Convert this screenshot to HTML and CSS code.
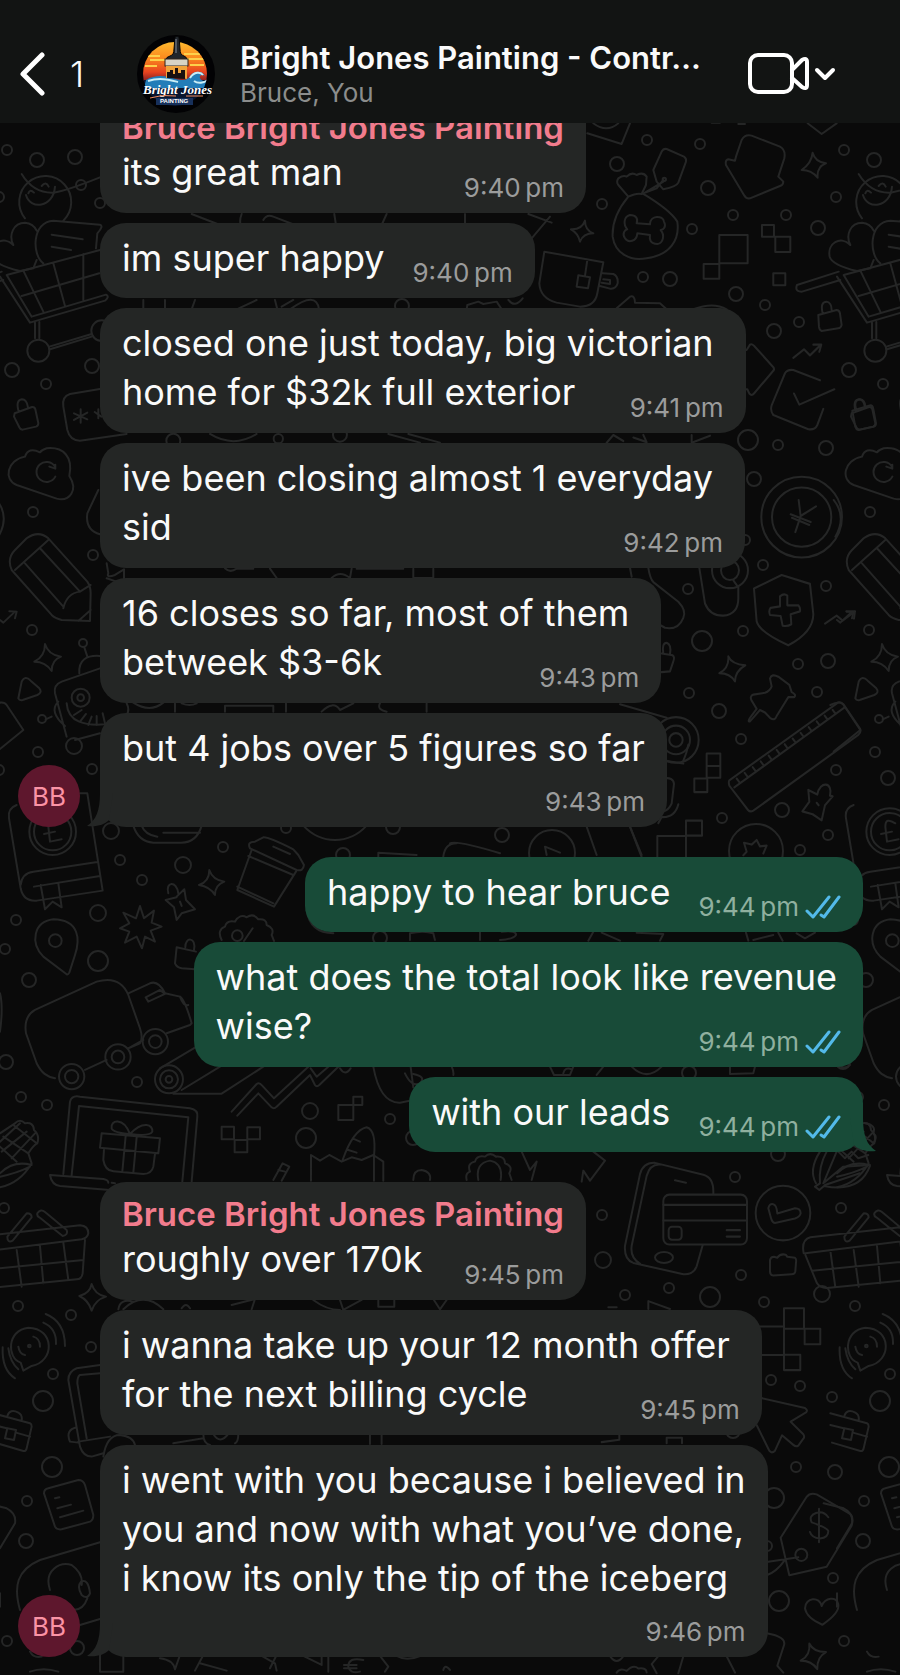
FILE: index.html
```
<!DOCTYPE html>
<html lang="en">
<head>
  <meta charset="UTF-8">
  <meta name="viewport" content="width=device-width, initial-scale=1.0">
  <title>Bright Jones Painting - Chat</title>
  <link rel="stylesheet" href="styles.css">
</head>
<body>
  <!-- Shared icons -->
  <svg class="sprite" aria-hidden="true">
    <symbol id="ticks" viewBox="0 0 36 24">
      <path d="M2 16L8 22L24 2M16 20L19 22L34 2" fill="none" stroke="#53b9e9" stroke-width="3" stroke-linecap="round" stroke-linejoin="round"/>
    </symbol>
  </svg>

  <header class="header">
    <button class="back" aria-label="Back, 1 unread">
      <svg width="26" height="44" viewBox="0 0 26 44"><path d="M22 3L3 22L22 41" fill="none" stroke="#fff" stroke-width="5" stroke-linecap="round" stroke-linejoin="round"/></svg>
      <span>1</span>
    </button>
    <svg class="logo" viewBox="0 0 80 80" role="img" aria-label="Bright Jones Painting logo">
      <defs>
        <linearGradient id="sky" x1="0" y1="0" x2="0" y2="1">
          <stop offset="0" stop-color="#fdb92e"/>
          <stop offset=".4" stop-color="#fb8a1e"/>
          <stop offset=".75" stop-color="#e8431f"/>
          <stop offset="1" stop-color="#7a1b22"/>
        </linearGradient>
        <clipPath id="disc"><circle cx="39" cy="40" r="32"/></clipPath>
      </defs>
      <circle cx="40" cy="40" r="39" fill="#020204"/>
      <g clip-path="url(#disc)">
        <rect x="7" y="8" width="64" height="40" fill="url(#sky)"/>
        <path d="M10 22h14M14 26h16M48 20h16M50 25h18M9 32h12M54 31h14" stroke="#fdd04a" stroke-width="2"/>
        <rect x="5" y="46" width="70" height="30" fill="#09152f"/>
        <path d="M10 46C20 40 30 42 40 45C48 47 52 46 55 41C59 36 67 37 69 42C66 40 63 41 64 44C66 49 74 47 76 45V54H8Z" fill="#237db8"/>
        <path d="M12 47C24 43 34 46 42 48M54 44C58 37 65 38 67 41M58 47C62 50 68 49 72 46" fill="none" stroke="#c9edf6" stroke-width="2"/>
      </g>
      <path d="M39 3Q41 1 43 3L44 15Q44 21 48 22Q51 23 51 26H30Q30 23 34 22Q38 21 38 15Z" fill="#20252b" stroke="#050505"/>
      <path d="M40 5v14" stroke="#87909a"/>
      <rect x="29" y="25" width="23" height="7" fill="#d8d3c5" stroke="#30251c"/>
      <path d="M30 32H51V45Q41 42 30 44Z" fill="#f0a33c"/>
      <path d="M31 44V38h3v-2h3v4h2v-6h3v5h3v-3h4v9Z" fill="#1a1010"/>
      <text class="logo-script" x="7" y="60">Bright Jones</text>
      <path d="M14 64Q26 60 40 62M50 62H67" fill="none" stroke="#f08a5d"/>
      <rect x="20" y="64" width="37" height="7" fill="#17305a"/>
      <text class="logo-small" x="24" y="69">PAINTING</text>
    </svg>
    <div class="chat-info">
      <h1>Bright Jones Painting - Contr…</h1>
      <p>Bruce, You</p>
    </div>
    <button class="call" aria-label="Video call">
      <svg width="88" height="42" viewBox="0 0 88 42" fill="none" stroke="#fff" stroke-width="4" stroke-linecap="round" stroke-linejoin="round">
        <rect x="2" y="2" width="42" height="37" rx="8"/>
        <path d="M44 17L54 7Q59 4 59 9V32Q59 37 54 34L44 25"/>
        <path d="M69 17L77 25L85 17"/>
      </svg>
    </button>
  </header>

  <main class="chat">
    <!-- Doodle wallpaper, one tile is 837px wide -->
    <svg class="wallpaper" aria-hidden="true">
      <g transform="translate(0 -123)">
        <g id="doodles" fill="none" stroke="#252626" stroke-width="2" stroke-linecap="round" stroke-linejoin="round">
          <!-- dots -->
          <g>
            <circle cx="7" cy="150" r="5"/><circle cx="37" cy="160" r="7"/><circle cx="81" cy="185" r="5"/><circle cx="75" cy="157" r="7"/><circle cx="100" cy="203" r="5"/><circle cx="-1" cy="197" r="5"/>
            <circle cx="12" cy="370" r="7"/><circle cx="92" cy="366" r="7"/><circle cx="46" cy="384" r="5"/><circle cx="33" cy="512" r="5"/><circle cx="93" cy="555" r="5"/><circle cx="32" cy="630" r="5"/>
            <circle cx="647" cy="140" r="5"/><circle cx="700" cy="144" r="5"/><circle cx="617" cy="164" r="7"/><circle cx="708" cy="188" r="7"/><circle cx="602" cy="204" r="5"/><circle cx="733" cy="215" r="5"/><circle cx="786" cy="215" r="5"/><circle cx="818" cy="228" r="7"/><circle cx="692" cy="229" r="5"/><circle cx="643" cy="277" r="5"/><circle cx="670" cy="279" r="7"/><circle cx="736" cy="294" r="7"/><circle cx="765" cy="305" r="5"/><circle cx="799" cy="322" r="5"/><circle cx="774" cy="331" r="7"/>
            <circle cx="748" cy="440" r="10"/><circle cx="778" cy="445" r="5"/><circle cx="826" cy="448" r="7"/><circle cx="754" cy="479" r="7"/><circle cx="745" cy="540" r="5"/><circle cx="763" cy="565" r="5"/><circle cx="826" cy="586" r="5"/><circle cx="688" cy="589" r="5"/><circle cx="743" cy="631" r="5"/><circle cx="702" cy="641" r="10"/><circle cx="798" cy="664" r="5"/><circle cx="828" cy="661" r="7"/><circle cx="689" cy="693" r="5"/><circle cx="817" cy="692" r="5"/><circle cx="719" cy="711" r="7"/><circle cx="741" cy="739" r="5"/><circle cx="51" cy="778" r="7"/><circle cx="-1" cy="770" r="5"/><circle cx="782" cy="810" r="7"/><circle cx="722" cy="818" r="5"/><circle cx="828" cy="835" r="5"/><circle cx="800" cy="850" r="5"/>
            <circle cx="502" cy="835" r="7"/><circle cx="552" cy="853" r="23"/><circle cx="756" cy="851" r="27"/><circle cx="778" cy="1154" r="7"/><circle cx="735" cy="1177" r="5"/><circle cx="689" cy="1073" r="7"/>
            <circle cx="83" cy="643" r="4"/><circle cx="42" cy="719" r="4"/><circle cx="74" cy="746" r="8"/><circle cx="38" cy="752" r="5"/><circle cx="92" cy="769" r="5"/><circle cx="111" cy="831" r="8"/><circle cx="120" cy="860" r="5"/><circle cx="142" cy="880" r="5"/><circle cx="183" cy="865" r="8"/><circle cx="223" cy="847" r="5"/><circle cx="16" cy="920" r="5"/><circle cx="98" cy="913" r="8"/><circle cx="5" cy="949" r="5"/><circle cx="98" cy="961" r="10"/><circle cx="29" cy="980" r="7"/><circle cx="286" cy="828" r="5"/><circle cx="343" cy="855" r="7"/><circle cx="393" cy="827" r="7"/><circle cx="380" cy="938" r="7"/>
            <circle cx="6" cy="1062" r="7"/><circle cx="21" cy="1097" r="5"/><circle cx="47" cy="1105" r="5"/><circle cx="137" cy="1082" r="5"/><circle cx="310" cy="1111" r="8"/><circle cx="306" cy="1138" r="10"/><circle cx="390" cy="1119" r="5"/><circle cx="413" cy="1138" r="7"/><circle cx="4" cy="1208" r="5"/><circle cx="18" cy="1306" r="5"/><circle cx="71" cy="1315" r="5"/><circle cx="91" cy="1347" r="5"/><circle cx="53" cy="1374" r="5"/><circle cx="43" cy="1401" r="10"/><circle cx="52" cy="1467" r="10"/><circle cx="27" cy="1501" r="5"/><circle cx="26" cy="1541" r="7"/><circle cx="7" cy="1641" r="5"/><circle cx="77" cy="1648" r="7"/>
            <circle cx="602" cy="1215" r="5"/><circle cx="603" cy="1260" r="8"/><circle cx="741" cy="1275" r="5"/><circle cx="669" cy="1288" r="5"/><circle cx="625" cy="1295" r="5"/><circle cx="710" cy="1297" r="10"/><circle cx="764" cy="1302" r="5"/><circle cx="822" cy="1294" r="8"/><circle cx="771" cy="1380" r="5"/><circle cx="800" cy="1386" r="5"/><circle cx="832" cy="1397" r="5"/><circle cx="796" cy="1467" r="5"/><circle cx="835" cy="1472" r="7"/><circle cx="774" cy="1498" r="10"/><circle cx="767" cy="1546" r="5"/><circle cx="779" cy="1601" r="10"/><circle cx="833" cy="1578" r="5"/><circle cx="733" cy="1431" r="7"/>
          </g>

          <!-- smiley, heart, cart, lock, cloud -->
          <g transform="translate(0 200) scale(.3333)" stroke-width="6">
            <path d="M65 -78Q100 -20 160 -22Q200 -28 300 -68"/>
            <path d="M75 55A78 78 0 1 1 190 62M78 -15C90 30 160 25 165 -40M85 -20Q90 -34 102 -22M125 -42Q138 -58 146 -40"/>
            <path d="M40 135C25 105 40 68 75 68Q100 70 110 92M40 135C10 105 -30 130 -22 170Q-15 195 60 213L100 205L110 180M130 190C95 165 95 65 160 62L300 74Q312 78 292 100L288 145M155 104L248 118M155 140L213 150"/>
            <path d="M5 215L-120 255Q-128 275 -105 275L10 240M0 230L90 368L315 302Q330 290 318 284L95 350L20 225L300 150M160 190L195 318M250 162V300M65 288L298 220M70 212L130 335M105 368V415M118 366V415M148 440L275 402M150 448L275 410"/>
            <circle cx="115" cy="452" r="33"/><circle cx="305" cy="392" r="31"/>
            <path d="M44 640L96 621Q104 620 106 628L115 670Q115 678 108 680L68 689Q60 688 58 682L42 650ZM56 634Q46 600 66 598Q80 598 84 622"/>
            <path d="M340 560L210 582Q185 590 190 620L202 690Q210 722 240 722L380 702M242 628V668M222 640L262 658M262 638L222 660M295 628V655M284 636L304 650"/>
            <path d="M75 770C20 780 10 840 50 855L170 896C210 905 235 870 208 828C220 770 190 740 140 745Q125 750 120 757Q85 740 75 770ZM165 800A30 30 0 1 0 166 830M148 800L166 806V794"/>
            <path d="M-10 900Q30 950 -5 1010M295 870L262 940Q255 990 300 1003"/>
            <path d="M35 1110Q20 1075 45 1050L80 1015Q115 990 145 1015L262 1145Q272 1160 272 1180L270 1263L185 1260Q165 1255 155 1245L35 1110ZM145 1020L45 1110M120 1045L240 1175M75 1090L190 1220M240 1175Q200 1180 190 1225M240 1175L272 1155M235 1263L272 1230M0 1260L10 1268L45 1235M45 1255L50 1235L28 1234"/>
            <path d="M320 1090L325 1120Q318 1135 345 1125L372 1108V1140M320 1135L350 1145M430 300V328M495 300V328M585 300L575 328M710 328L770 300M825 300L832 328M845 320L880 300M870 328Q950 270 957 328"/>
            <circle cx="1206" cy="318" r="21"/><circle cx="520" cy="722" r="21"/><circle cx="835" cy="716" r="14"/><circle cx="1020" cy="704" r="21"/>
            <path d="M575 42L660 75M725 42Q718 60 722 75M790 60Q800 42 820 50L885 75M1003 42L1008 75M1160 42L1145 75M630 702Q700 745 770 702M1165 702L1260 728M1225 702L1320 728M675 1105Q690 1120 710 1106L760 1106M810 1106L830 1134M995 1134Q1020 1110 1050 1134L1055 1106M1070 1106H1210M1240 1106V1134H1300V1106"/>
          </g>

          <!-- robot, book, cup, badges, truck -->
          <g transform="translate(0 560) scale(.3333)" stroke-width="6">
            <path d="M135 252Q145 285 183 290Q155 300 155 333Q137 305 103 305Q135 290 135 252Z"/>
            <path d="M55 415L65 365Q75 345 92 362L118 385Q128 397 112 405L68 420Q58 422 55 415ZM-20 435Q10 420 20 435L70 510L-10 575"/>
            <path d="M253 262L262 290M238 340C235 300 260 285 300 288M300 325L185 365Q160 375 165 400L200 530M175 425Q145 455 195 498M137 478L155 470M225 540L300 520M200 430Q205 510 340 490Q400 470 380 430M222 465L245 450M240 485L258 462M265 495L275 470M290 495V468M315 490L308 460"/>
            <circle cx="242" cy="413" r="27"/><circle cx="242" cy="413" r="10"/><path d="M400 428Q450 460 490 428M525 430V455M545 430Q570 440 590 430M675 455V437H820V455M858 430V455M965 455Q1000 420 1020 450L1060 430M1140 430Q1130 450 1160 455M1280 430V455"/>
            <path d="M50 735Q22 745 27 775L62 985Q70 1025 110 1022L308 992L262 700L240 700M62 975Q65 940 100 935L292 906M102 980L300 948M122 975L135 1048L158 1025L185 1042L175 970"/>
            <circle cx="158" cy="815" r="70"/><circle cx="158" cy="815" r="56"/><path d="M175 790Q145 770 145 800L150 845L185 838M132 822L165 815"/>
            <path d="M400 797Q415 845 460 848H540Q590 850 605 797M425 797Q435 825 472 830M490 818H600M910 797Q950 840 1005 840Q1060 840 1100 797"/>
            <path d="M750 865Q740 845 765 845L790 832Q805 830 880 868L895 885L912 915Q910 935 890 930L750 865ZM755 870L712 990L822 1040L888 935M745 888L880 945M820 860L870 882M712 980L820 1030"/>
            <path d="M505 1000C495 965 530 960 535 1000M530 1010L553 988L558 1020L585 1048L545 1060L530 1080L522 1042L497 1020L530 1012M540 1025L545 1038"/>
            <path d="M628 930Q638 960 673 965Q645 975 645 1005Q630 980 597 975Q628 965 628 930Z"/>
            <path d="M420 1038L432 1075L462 1052L455 1088L485 1100L452 1112L465 1145L435 1130L426 1165L410 1130L375 1148L388 1115L360 1105L388 1090L370 1058L408 1075Z"/>
            <path d="M200 1243L130 1190C90 1150 100 1085 160 1078C240 1080 240 1140 225 1185L208 1238Q204 1245 200 1243Z"/><circle cx="166" cy="1142" r="19"/>
            <path d="M530 1162L588 1175M530 1162L525 1210Q530 1222 545 1225L585 1228M556 1162C555 1130 590 1130 582 1170"/>
            <path d="M665 1140Q650 1110 675 1100Q680 1080 705 1085Q720 1060 740 1072Q760 1058 775 1078Q800 1075 800 1095Q825 1105 815 1125L822 1143M732 1143L758 1105"/><circle cx="712" cy="1127" r="16"/>
            <path d="M920 1050Q930 1120 1000 1120M1135 890V878L1250 885M1330 890Q1335 850 1370 850M1230 1140V1120Q1270 1110 1300 1120L1305 1140"/>
            <path d="M165 1555C140 1550 125 1540 110 1510L78 1420Q70 1370 105 1350L290 1265Q360 1245 385 1305L420 1405Q430 1435 420 1450L385 1465M385 1300L450 1270Q475 1260 495 1300L540 1310Q555 1320 575 1390L570 1395L500 1420M437 1312L480 1290L495 1302L445 1325ZM540 1310Q550 1340 565 1335M255 1530L320 1500M385 1465L430 1440"/>
            <circle cx="466" cy="1445" r="38"/><circle cx="466" cy="1445" r="19"/><circle cx="354" cy="1491" r="38"/><circle cx="354" cy="1491" r="19"/><circle cx="215" cy="1550" r="38"/><circle cx="215" cy="1550" r="20"/>
            <path d="M0 1300Q10 1340 0 1415"/>
          </g>

          <!-- laptop, basket, bell -->
          <g transform="translate(0 1000) scale(.3333)" stroke-width="6">
            <circle cx="507" cy="238" r="42"/><circle cx="507" cy="238" r="27"/><circle cx="507" cy="238" r="10"/>
            <path d="M480 205L590 140M545 270L660 200M520 281H665L790 200M695 335L770 252Q778 246 786 256L822 295L925 200M712 347L775 280L815 322Q822 328 830 320L930 225L945 255Q950 262 958 255L1015 200M932 205L950 230L985 200M1020 205Q1035 230 1052 205M1120 200Q1140 310 1200 308L1240 300M1215 220Q1235 262 1260 250Q1280 230 1240 222M1232 200L1240 262"/>
            <path d="M190 522L210 305Q215 285 240 290L570 325Q595 330 592 350L575 545M215 525L237 318L565 352L547 545M325 548Q325 540 310 537L150 525Q155 555 180 558L330 570M335 548L345 550"/>
            <path d="M305 400L480 415L475 460L300 443ZM312 448L310 480Q315 512 340 514L430 522Q455 522 460 500L465 462M377 408L367 515M410 412L400 518M390 402C370 350 330 360 335 385Q340 398 390 402ZM390 402C430 360 460 375 457 395Q450 410 390 402Z"/>
            <path d="M665 380H702V418H665ZM742 382H780V418H742ZM704 420H742V457H704ZM1015 315H1060V360H1015ZM1060 290H1087V315H1060Z"/>
            <path d="M933 542V465L960 482L988 465L1025 485L1055 472L1085 480L1120 465L1150 485V542M1028 480Q1060 390 1100 382Q1130 390 1122 470V542M1058 415L1080 425M1045 450L1070 458M820 540L848 490L868 500L845 542M835 510L855 515M1240 540Q1240 510 1265 510Q1295 515 1290 540"/>
            <path d="M0 400L45 370Q60 355 75 370Q100 365 102 390Q120 405 112 430Q100 435 85 460L95 490Q60 550 0 562M0 440L50 485M10 410L85 460M40 375L110 430M0 425L60 370M5 455L80 395M35 475L105 400M0 520Q40 480 95 495M90 500Q50 520 0 530"/>
            <path d="M-100 760Q-108 720 -80 712L240 676Q265 678 265 700Q262 715 245 718L-95 760M-95 765L-60 850Q-50 865 -30 864L230 838Q245 838 248 820L255 720M-75 812L250 780M50 750L65 860M120 738L130 850M190 728L205 840M-20 752L-5 862M22 710L80 640Q95 640 95 652L38 722Q22 730 22 710ZM112 640Q122 625 135 636L200 690Q205 705 188 708L118 652Q110 648 112 640Z"/>
            <path d="M275 852Q285 885 318 890Q285 900 275 932Q265 900 238 888Q270 880 275 852Z"/>
            <path d="M70 1112L62 1088C20 1075 20 990 85 983C165 985 165 1085 95 1098ZM55 1040Q58 1062 75 1065M100 1010Q120 1015 120 1040M130 968Q170 985 168 1032M137 942Q195 965 195 1038M25 1045Q30 1085 55 1108M8 1042Q5 1110 45 1135"/><circle cx="88" cy="1038" r="4"/>
            <path d="M300 1095L230 1105Q205 1115 205 1140L240 1340Q250 1370 275 1370L310 1360M300 1120L240 1125Q232 1130 232 1150L260 1315M235 1325L330 1310M230 1282Q195 1290 210 1325L235 1328M355 928Q360 895 400 905M370 928Q430 870 490 928M545 925Q558 905 570 925M695 915L765 897L755 928M940 900Q980 930 1020 930M1020 900L1030 930L1085 900M1135 895V920H1183V895M1300 897L1320 928L1340 900"/>
            <path d="M-20 1240L90 1270Q95 1272 95 1280L80 1345Q78 1355 70 1353L-15 1328M22 1248Q30 1225 55 1238Q68 1245 65 1262M-20 1275L20 1285M48 1298L90 1310M22 1285L48 1290L42 1320L15 1315ZM310 1370Q320 1305 360 1305Q400 1310 405 1335M520 1330L610 1315M610 1302Q610 1330 630 1335M640 1302Q660 1335 685 1302M715 1302Q715 1325 705 1330M1110 1300V1332M1145 1300V1332"/>
          </g>

          <!-- note, headset, bottom row -->
          <g transform="translate(0 1380) scale(.3333)" stroke-width="6">
            <path d="M132 340Q132 328 145 325L235 300Q250 300 255 315L280 405Q280 420 270 425L185 448Q170 450 165 440ZM165 355L178 352M172 385L213 374M180 412L250 392"/>
            <path d="M-40 370L20 385Q50 400 45 430L0 505M300 487L120 540C50 570 40 620 60 690M150 630C130 570 180 545 215 555Q250 580 245 615M243 605Q265 595 270 640Q262 660 245 645Q230 620 243 605ZM262 655Q250 690 220 690M240 735L300 717M90 815Q100 835 125 830M90 875Q130 860 175 875M0 680V640"/>
            <path d="M300 822V875H370V822M480 835Q520 840 525 868L540 825M610 825L585 872M600 850L680 872M780 825L825 850L830 872M830 825L810 865M910 828L965 855V828M985 825V875M1090 840Q1045 830 1045 860Q1050 882 1080 875M1032 855H1070M1032 865H1070M1140 828L1165 860L1155 875M1190 828Q1220 845 1260 828M1330 870Q1335 850 1350 870"/>
          </g>

          <!-- tag, bag with bone, house, mug, squares -->
          <g transform="translate(450 0) scale(.3333)" stroke-width="6">
            <path d="M412 400L515 432L540 370M430 370Q470 400 505 370M785 368H810M865 372L885 372M1073 370L1115 402L1160 370"/>
            <path d="M610 510L635 455Q640 445 650 447L702 470Q710 475 708 485L685 548Q680 560 640 568L620 545ZM640 540L620 565L580 580M585 578L640 545"/><circle cx="643" cy="538" r="5"/>
            <path d="M505 535Q520 525 530 530Q545 515 560 525Q580 515 590 530L588 555L575 582Q560 578 535 590L505 555Q498 545 505 535ZM535 590Q485 650 488 710C495 760 540 785 590 775C660 765 690 720 682 665Q660 630 580 582"/>
            <path d="M560 670L600 673C600 645 640 645 642 665C650 680 640 690 632 690C645 705 640 730 622 732C600 732 598 718 600 705L562 700C560 725 535 730 525 715C515 700 525 690 532 688C520 675 520 650 540 645C558 645 565 655 560 670Z"/>
            <path d="M858 470L875 420Q885 402 905 407L990 440Q1008 450 1003 475L985 530L1000 545Q1000 555 990 558L900 595Q888 597 882 585L828 495Q825 480 835 478L855 482Z"/>
            <path d="M1088 458Q1095 485 1128 490Q1100 500 1103 533Q1085 510 1055 510Q1085 490 1088 458ZM405 662Q405 690 430 700Q400 700 390 725Q385 700 363 688Q395 690 405 662Z"/>
            <path d="M283 755L460 787L442 880Q435 920 390 920L320 908Q270 895 268 850ZM412 780L405 828M385 826L420 832L414 865L380 860ZM458 820L490 822Q505 828 503 850Q498 868 480 866L450 858M460 838L480 840V852L455 848"/>
            <path d="M808 705H893V790H808ZM761 792H808V836H761ZM936 675H972V710H936ZM976 710H1021V756H976ZM970 820H1006V856H970Z"/>
            <path d="M1105 945L1160 930Q1168 930 1170 940L1175 975Q1172 985 1165 985L1115 993Q1108 990 1107 980ZM1118 940Q1110 905 1130 905Q1145 908 1145 930M500 925L540 890Q555 885 555 908L630 910L650 928M730 928Q790 905 830 928M45 642V672M235 642L305 668M300 650L245 715M50 928L52 915L85 905L100 912L140 905L155 928M175 900Q195 925 218 895"/>
          </g>

          <!-- arrow, check box, coin, shield, pin, ruler -->
          <g transform="translate(600 300) scale(.3333 .3571)" stroke-width="6">
            <path d="M428 140H440L450 125Q455 122 462 128L520 188Q525 195 518 200L462 262Q455 270 448 262L442 250H428M580 162L612 138L630 155L663 125M640 125H664L658 145M660 225L580 196Q562 194 555 205L515 295Q510 310 520 322L625 362Q645 365 652 350L670 305M582 262L598 293L703 250"/>
            <path d="M757 310L812 295Q818 295 820 305L828 345Q828 353 820 355L775 364Q768 362 766 355ZM768 306Q760 280 780 278Q795 280 796 298"/>
            <ellipse cx="605" cy="608" rx="121" ry="113"/><ellipse cx="605" cy="608" rx="89" ry="83"/><path d="M596 560L602 605L648 578M602 605L586 650M572 600L632 622M576 610L628 630"/>
            <path d="M545 770L462 808L470 900Q478 930 565 967Q640 930 640 880L630 795ZM540 830Q552 820 562 828V855H595Q602 862 600 872L572 880L574 908Q562 915 548 912L542 885L510 882Q505 870 512 862L540 858Z"/>
            <path d="M675 906L710 884L728 898L765 872M740 873L765 872L762 892M385 998Q395 1020 436 1023Q405 1040 405 1068Q390 1045 358 1045Q388 1030 385 998Z"/>
            <circle cx="390" cy="757" r="27"/><ellipse cx="390" cy="757" rx="54" ry="50"/><path d="M298 750L315 850Q330 885 370 884Q415 880 415 835V805L400 785M145 750Q150 780 160 790L235 845Q260 870 250 890Q235 925 195 918L180 910M90 750L95 775M185 990L218 995Q225 1000 220 1012L210 1040L185 1042M190 990Q185 960 200 960Q215 965 210 992"/>
            <path d="M510 1060Q515 1045 535 1055L568 1078L575 1098Q590 1105 583 1112L565 1112L530 1165Q525 1180 510 1170L495 1155L480 1148L450 1180Q442 1182 450 1170L470 1145L455 1122Q448 1110 460 1105L495 1100Q510 1095 515 1082Z"/>
            <path d="M388 1345L715 1127Q722 1125 730 1132L780 1200Q785 1210 775 1218L460 1430Q450 1435 444 1428L388 1360Q385 1350 388 1345ZM403 1365L735 1140M410 1340L418 1350M434 1324L442 1334M458 1308L466 1318M482 1292L490 1302M506 1276L514 1286M530 1260L538 1270M554 1244L562 1254M578 1228L586 1238M602 1212L610 1222M626 1196L634 1206M650 1180L658 1190M674 1164L682 1174M698 1148L706 1158"/>
            <ellipse cx="228" cy="1232" rx="68" ry="64"/><ellipse cx="228" cy="1232" rx="42" ry="40"/><ellipse cx="228" cy="1232" rx="20" ry="19"/><path d="M60 1132L200 1170M190 1290L250 1298M265 1245Q260 1270 250 1290M190 1340Q220 1335 222 1355L215 1410Q205 1430 190 1432M235 1412Q225 1450 185 1448L175 1465"/>
            <path d="M320 1270H361V1338H320ZM320 1305H361M283 1340H322V1378H283ZM258 1458H306V1500H258ZM172 1560V1501H258V1560M90 1475L125 1560"/>
            <path d="M625 1372L652 1385C660 1345 700 1350 690 1388L698 1390L675 1415L665 1457L638 1440L607 1432L628 1405ZM650 1408L656 1415"/>
            <path d="M20 400L40 378L70 395M100 385L140 398L130 378M275 378V400L330 380M430 1555L440 1545L432 1520L455 1525L470 1512L480 1530L500 1528L490 1550"/>
          </g>

          <!-- play, balloon, mobile with card, check -->
          <g transform="translate(450 800) scale(.3333)" stroke-width="6">
            <path d="M290 165L285 140L330 158M410 80L440 165M540 80L575 165M0 130Q20 120 150 160M90 395V420M155 395Q200 390 198 405Q190 418 150 420M430 395L415 422M455 398L510 422M560 398L640 402L630 422M888 398L895 422M985 398L998 422M910 420L970 405M1040 400L1065 415L1095 398M300 800L312 825H360L370 800M340 820Q345 800 365 808M440 825L460 800M545 800Q590 845 635 800M840 800V822L910 820L915 800M1160 795Q1185 810 1200 795M5 800Q12 815 10 825"/>
            <path d="M50 1140Q45 1120 60 1115Q50 1090 75 1085Q80 1065 105 1070Q120 1055 138 1070Q165 1068 165 1090Q190 1098 178 1120L185 1140M85 1140Q75 1090 120 1082Q160 1090 152 1140M215 1055L240 1110L260 1085L245 1140M395 1145L400 1112L420 1142L465 1082L430 1055"/>
            <path d="M1098 1150Q1075 1110 1110 1055M1130 1055Q1105 1100 1110 1150M1160 1055L1120 1150L1180 1100L1260 1095M1110 1150L1095 1160L1108 1170L1122 1158Q1230 1180 1260 1098M1165 1055L1185 1075L1205 1055L1225 1075L1255 1065M1125 1155L1230 1120M1245 970Q1280 975 1270 1000Q1285 1010 1270 1030"/>
          </g>
          <g transform="translate(580 1140) scale(.3333 .3414)" stroke-width="6">
            <path d="M400 157Q402 110 370 102L225 67Q190 65 180 100L135 310Q132 350 160 360L310 393Q340 395 350 370L368 308M240 72Q210 70 200 105L155 310Q150 345 180 362M285 118L318 125"/>
            <rect x="250" y="160" width="251" height="146" rx="18"/><path d="M250 190H500M250 236H500M440 264H480M440 283H480"/><rect x="266" y="254" width="39" height="38" rx="10"/><ellipse cx="252" cy="344" rx="27" ry="16"/>
            <ellipse cx="609" cy="214" rx="82" ry="80"/><path d="M565 200Q568 185 580 188Q590 190 592 215L645 200Q662 200 662 215Q660 225 645 230L585 243Q578 243 574 232Z"/>
            <path d="M570 352Q572 342 582 342L592 345Q600 332 617 336L622 342L645 345Q650 348 648 360L646 385Q645 393 635 393L580 397Q570 395 570 385ZM205 495V472L270 495M85 490H110"/>
            <path d="M540 546H612V630H540M612 493H672V553H612ZM674 553H721V598H674ZM612 629H661V674H612ZM540 755L675 785Q685 792 678 798L632 825L670 862Q675 870 670 875L655 895Q648 900 640 893L606 865L585 910Q575 920 568 910L530 835"/>
            <path d="M602 1165L680 1045Q690 1032 710 1038L810 1095Q822 1105 815 1130L740 1250L628 1275ZM745 1105Q730 1085 710 1092Q685 1100 695 1120Q740 1135 745 1145Q745 1165 720 1167Q695 1165 690 1148M717 1080V1178M560 1236L655 1222M560 1275Q590 1265 615 1230"/><circle cx="664" cy="1215" r="18"/>
            <path d="M725 1365C720 1335 675 1340 675 1372Q680 1400 727 1420Q780 1385 775 1360C770 1335 735 1340 725 1365ZM688 1475Q700 1500 738 1500Q710 1515 712 1550Q695 1525 662 1525Q692 1510 688 1475Z"/>
            <path d="M560 1445Q620 1455 612 1480L592 1540L610 1560M90 1512Q110 1540 130 1512M110 1560Q120 1545 140 1555Q160 1535 175 1548Q200 1545 200 1560M235 1512L215 1535L230 1562M310 1512L295 1562M440 1512L465 1560M260 888V872H306V888M65 885L118 878V862"/>
          </g>
        </g>
        <use href="#doodles" x="837"/>
      </g>
    </svg>

    <div class="messages">
      <section class="group received">
        <div class="avatar">BB</div>
        <div class="bubbles">
          <article class="bubble over">
            <h2>Bruce Bright Jones Painting</h2>
            <p>its great man</p>
            <time>9:40&thinsp;pm</time>
          </article>
          <article class="bubble inline">
            <p>im super happy</p>
            <time>9:40&thinsp;pm</time>
          </article>
          <article class="bubble over wide">
            <p>closed one just today, big victorian<br>home for $32k full exterior</p>
            <time>9:41&thinsp;pm</time>
          </article>
          <article class="bubble over wide">
            <p>ive been closing almost 1 everyday<br>sid</p>
            <time>9:42&thinsp;pm</time>
          </article>
          <article class="bubble over wide">
            <p>16 closes so far, most of them<br>betweek $3-6k</p>
            <time>9:43&thinsp;pm</time>
          </article>
          <article class="bubble stacked tail">
            <p>but 4 jobs over 5 figures so far</p>
            <time>9:43&thinsp;pm</time>
          </article>
        </div>
      </section>

      <section class="group sent">
        <div class="bubbles">
          <article class="bubble inline">
            <p>happy to hear bruce</p>
            <time>9:44&thinsp;pm <svg class="ticks" role="img" aria-label="Read"><use href="#ticks"/></svg></time>
          </article>
          <article class="bubble over">
            <p>what does the total look like revenue<br>wise?</p>
            <time>9:44&thinsp;pm <svg class="ticks" role="img" aria-label="Read"><use href="#ticks"/></svg></time>
          </article>
          <article class="bubble inline tail">
            <p>with our leads</p>
            <time>9:44&thinsp;pm <svg class="ticks" role="img" aria-label="Read"><use href="#ticks"/></svg></time>
          </article>
        </div>
      </section>

      <section class="group received">
        <div class="avatar">BB</div>
        <div class="bubbles">
          <article class="bubble over">
            <h2>Bruce Bright Jones Painting</h2>
            <p>roughly over 170k</p>
            <time>9:45&thinsp;pm</time>
          </article>
          <article class="bubble over wide">
            <p>i wanna take up your 12 month offer<br>for the next billing cycle</p>
            <time>9:45&thinsp;pm</time>
          </article>
          <article class="bubble stacked tail">
            <p>i went with you because i believed in<br>you and now with what you’ve done,<br>i know its only the tip of the iceberg</p>
            <time>9:46&thinsp;pm</time>
          </article>
        </div>
      </section>
    </div>
  </main>
</body>
</html>
```
FILE: styles.css
```
/* General Styles */
* {
  box-sizing: border-box;
}

body {
  margin: 0;
  min-height: 100vh;
  display: flex;
  flex-direction: column;
  font-family: Inter, "Liberation Sans", sans-serif;
  background-color: #0a0a0a;
  color: #fafafa;
}

h1, h2, p {
  margin: 0;
}

button {
  padding: 0;
  border: none;
  background: none;
  color: inherit;
  font-family: inherit;
  cursor: pointer;
}

.sprite {
  position: absolute;
  width: 0;
  height: 0;
}

/* Header */
.header {
  position: relative;
  z-index: 1;
  display: flex;
  align-items: center;
  height: 123px;
  padding: 24px 64px 0 20px;
  background-color: #121413;
}

.back {
  display: flex;
  align-items: center;
  gap: 24px;
  width: 116px;
  font-size: 36px;
  font-weight: 300;
}

.logo {
  flex: none;
  width: 80px;
  height: 80px;
  margin-right: 24px;
}

.logo-script {
  font: italic bold 13px "Liberation Serif", serif;
  fill: #fff;
}

.logo-small {
  font: bold 6px "Liberation Sans", sans-serif;
  fill: #fff;
}

.chat-info {
  flex: 1;
  min-width: 0;
}

.chat-info h1 {
  font-size: 31px;
  line-height: 38px;
  font-weight: 600;
  white-space: nowrap;
}

.chat-info p {
  font-size: 26px;
  line-height: 32px;
  color: #8b8d8c;
}

.call svg {
  display: block;
}

/* Chat Area */
.chat {
  position: relative;
  flex: 1;
  overflow: hidden;
}

.wallpaper {
  position: absolute;
  inset: 0;
  width: 100%;
  height: 100%;
}

/* Scrolled so the first bubble sits partly under the header */
.messages {
  position: relative;
  display: flex;
  flex-direction: column;
  gap: 30px;
  margin-top: -28px;
  padding: 0 37px 18px 18px;
}

.group {
  display: flex;
  align-items: flex-end;
  gap: 20px;
}

.sent {
  justify-content: flex-end;
}

.bubbles {
  display: flex;
  flex-direction: column;
  align-items: flex-start;
  gap: 10px;
}

.sent .bubbles {
  align-items: flex-end;
}

.avatar {
  display: flex;
  align-items: center;
  justify-content: center;
  flex: none;
  width: 62px;
  height: 62px;
  border-radius: 50%;
  background-color: #5e172d;
  color: #fb93a5;
  font-size: 26px;
}

/* Bubbles */
.bubble {
  position: relative;
  padding: 11px 22px 9px;
  border-radius: 26px;
  background-color: #242625;
}

.sent .bubble {
  background-color: #184b38;
}

.bubble h2 {
  font-size: 33px;
  line-height: 42px;
  font-weight: 600;
  color: #f27c8d;
}

.bubble p {
  padding-bottom: 6px;
  font-size: 36px;
  line-height: 49px;
}

.bubble time {
  display: flex;
  align-items: center;
  justify-content: flex-end;
  gap: 6px;
  font-size: 26px;
  line-height: 33px;
  white-space: nowrap;
  color: #9b9c9c;
}

.sent time {
  color: #8fb09f;
}

.ticks {
  width: 36px;
  height: 24px;
}

/* Time on the same row as the text */
.inline {
  display: flex;
  align-items: flex-end;
  gap: 28px;
}

/* Time in the free corner of the last line */
.over {
  display: grid;
}

.over p,
.over time {
  grid-column: 1;
  grid-row: 2;
}

.over p {
  padding-bottom: 7px;
}

.sent .over p {
  padding-right: 4px;
}

.over time {
  align-self: end;
  justify-self: end;
}

.wide p {
  padding-right: 10px;
}

/* Time on its own row */
.stacked time {
  margin-top: 6px;
}

.tail::before {
  content: "";
  position: absolute;
  left: -13px;
  bottom: 0;
  width: 26px;
  height: 34px;
  background-color: inherit;
  clip-path: path("M13 0C13 18 9 27 0 33C10 34 17 32 22 27L26 0Z");
}

.sent .tail::before {
  left: auto;
  right: -13px;
  transform: scaleX(-1);
}
```
